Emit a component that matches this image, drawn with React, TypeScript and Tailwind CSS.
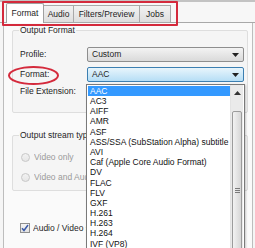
import React from "react";

const FORMATS = [
  "AAC",
  "AC3",
  "AIFF",
  "AMR",
  "ASF",
  "ASS/SSA (SubStation Alpha) subtitle",
  "AVI",
  "Caf (Apple Core Audio Format)",
  "DV",
  "FLAC",
  "FLV",
  "GXF",
  "H.261",
  "H.263",
  "H.264",
  "IVF (VP8)",
];

const TABS = [
  { label: "Format", w: "w-[38px]" },
  { label: "Audio", w: "w-[30px]" },
  { label: "Filters/Preview", w: "w-[66px]" },
  { label: "Jobs", w: "w-[31px]" },
];

function Arrow() {
  return (
    <svg width="7" height="4" viewBox="0 0 7 4" className="shrink-0">
      <path d="M0 0h7L3.5 4z" fill="#222" />
    </svg>
  );
}

function Radio({ label, className }: { label: string; className?: string }) {
  return (
    <div className={`flex items-center gap-[4px] pl-[8px] ${className ?? ""}`}>
      <span className="shrink-0 w-[9px] h-[9px] rounded-full border border-[#c8c8c8] bg-gradient-to-b from-[#f2f2f2] to-[#e6e6e6]" />
      <span className="w-[52px] overflow-hidden whitespace-nowrap text-[#9a9a9a]">{label}</span>
    </div>
  );
}

export default function App() {
  return (
    <div className="relative w-[255px] h-[248px] overflow-hidden bg-[#f5f5f5] text-[8.5px] text-[#1e1e1e] font-['Liberation_Sans',sans-serif] leading-none">
      <div className="h-[2px] bg-[#c3c3c3]" />

      {/* tab strip */}
      <div className="flex items-end h-[21px] pl-[6px] border-b border-[#a9a9a9] bg-[#f7f7f7]">
        {TABS.map((t, i) =>
          i === 0 ? (
            <div key={t.label} className={`${t.w} h-[20px] -mb-px flex items-center justify-center bg-white border border-b-0 border-[#a0a0a0] rounded-t-[2px]`}>
              {t.label}
            </div>
          ) : (
            <div key={t.label} className={`${t.w} h-[17px] flex items-center justify-center bg-gradient-to-b from-[#f2f2f2] to-[#dedede] border border-l-0 border-b-0 border-[#a9a9a9]`}>
              {t.label}
            </div>
          )
        )}
      </div>

      {/* tab page */}
      <div className="ml-[3px] mr-[2px] h-[230px] border-l border-r border-[#bdbdbd] bg-[#fafafa] pt-[7px] pl-[8px] pr-[4px]">
        <div className="relative h-[83px] border border-[#dedede] rounded-[2px] bg-[#f5f5f5]">
          <div className="absolute -top-[5px] left-[6px] px-[1px] bg-[#f7f7f7]">Output Format</div>
          <div className="flex items-center mt-[16px] h-[15px]">
            <span className="w-[74px] pl-[7px]">Profile:</span>
            <div className="w-[157px] h-[15px] flex items-center justify-between pl-[4px] pr-[4px] border border-[#8e8e8e] rounded-[2px] bg-gradient-to-b from-[#f3f3f3] to-[#dadada]">
              <span>Custom</span>
              <Arrow />
            </div>
          </div>
          <div className="flex items-center mt-[5px] h-[15px]">
            <span className="w-[74px] pl-[7px]">Format:</span>
            <div className="w-[157px] h-[15px] flex items-center justify-between pl-[4px] pr-[4px] border border-[#3c7fb1] rounded-[2px] bg-gradient-to-b from-[#e8f5fc] to-[#b6def5]">
              <span>AAC</span>
              <Arrow />
            </div>
          </div>
          <div className="mt-[5px] pl-[7px]">File Extension:</div>
        </div>

        <div className="relative mt-[22px] h-[56px] border border-[#dedede] rounded-[2px] bg-[#f5f5f5]">
          <div className="absolute -top-[5px] left-[6px] w-[67px] overflow-hidden whitespace-nowrap px-[1px] bg-[#f7f7f7]">Output stream type</div>
          <Radio label="Video only" className="mt-[17px]" />
          <Radio label="Video and Audio" className="mt-[11px]" />
        </div>

        <div className="flex items-center gap-[3px] mt-[32px] pl-[8px]">
          <span className="shrink-0 w-[10px] h-[10px] flex items-center justify-center border border-[#8f8f8f] bg-gradient-to-b from-[#f4f4f4] to-[#e2e2e2]">
            <svg width="8" height="8" viewBox="0 0 8 8">
              <path d="M1 4.2l2 2.3L7 1" stroke="#3a59a8" strokeWidth="1.5" fill="none" />
            </svg>
          </span>
          <span className="w-[54px] overflow-hidden whitespace-nowrap">Audio / Video settings</span>
        </div>
      </div>

      {/* dropdown list */}
      <div className="absolute left-[86px] top-[84px] w-[159px] h-[170px] flex border border-[#7a7a7a] bg-white shadow-[1px_1px_2px_rgba(0,0,0,0.2)]">
        <div className="flex-1 pt-[1px] pl-[1px]">
          {FORMATS.map((f, i) => (
            <div
              key={f}
              className={`h-[10.2px] flex items-center pl-[2px] whitespace-nowrap ${i === 0 ? "bg-[#3399ff] text-white" : "text-[#111]"}`}
            >
              {f}
            </div>
          ))}
        </div>
        <div className="w-[13px] mr-[1px] flex flex-col bg-[#eaeaea] border-l border-[#e3e3e3]">
          <div className="h-[16px] flex items-center justify-center">
            <svg width="7" height="4" viewBox="0 0 7 4">
              <path d="M0 4h7L3.5 0z" fill="#333" />
            </svg>
          </div>
          <div className="mt-[10px] flex-1 mx-[1px] border border-[#9b9b9b] rounded-[2px] bg-gradient-to-r from-[#f2f2f2] to-[#d6d6d6] flex flex-col items-center pt-[76px] gap-[1px]">
            <span className="w-[5px] h-px bg-[#7a7a7a]" />
            <span className="w-[5px] h-px bg-[#7a7a7a]" />
            <span className="w-[5px] h-px bg-[#7a7a7a]" />
          </div>
        </div>
      </div>

      {/* annotations */}
      <div className="absolute left-[2px] top-[1px] w-[176px] h-[25px] border-2 border-[#d42a3c] rounded-[1px] pointer-events-none" />
      <div className="absolute left-[8px] top-[66px] w-[51px] h-[19px] border-2 border-[#d42a3c] rounded-[50%] pointer-events-none" />
    </div>
  );
}
